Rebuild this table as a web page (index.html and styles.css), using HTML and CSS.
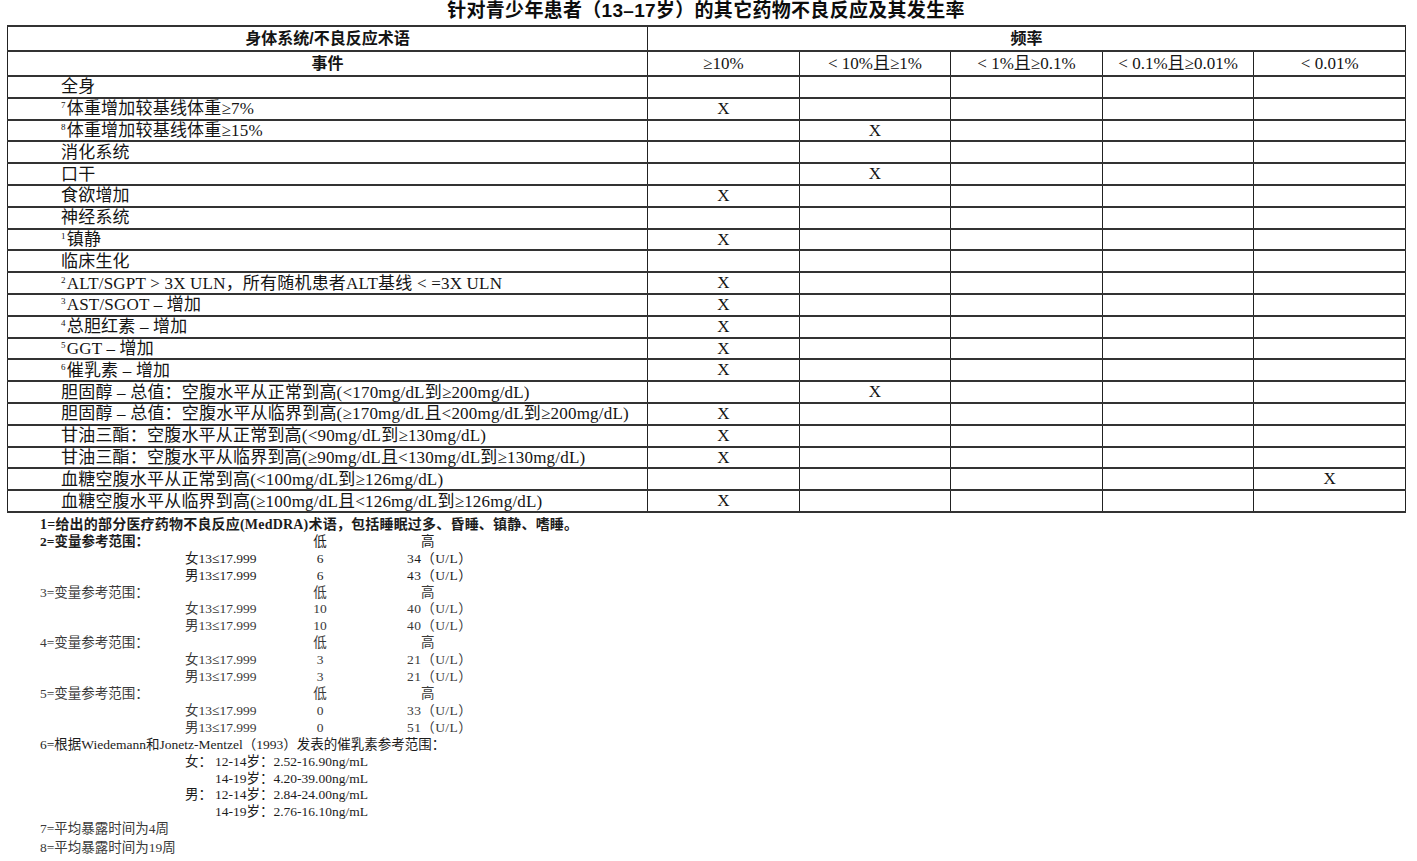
FILE: index.html
```html
<!DOCTYPE html>
<html lang="zh-CN">
<head>
<meta charset="utf-8">
<title>针对青少年患者（13–17岁）的其它药物不良反应及其发生率</title>
<link rel="stylesheet" href="styles.css">
</head>
<body>
<div class="page">
  <h1 class="title">针对青少年患者（13–17岁）的其它药物不良反应及其发生率</h1>
  <table class="freq">
    <colgroup>
      <col class="c-term"><col class="c-f"><col class="c-f"><col class="c-f"><col class="c-f"><col class="c-f">
    </colgroup>
    <thead>
      <tr class="hrow">
        <th class="head-b">身体系统/不良反应术语</th>
        <th class="head-b" colspan="5">频率</th>
      </tr>
      <tr class="hrow">
        <th class="head-b">事件</th>
        <th class="head-n">≥10%</th>
        <th class="head-n">&lt; 10%且≥1%</th>
        <th class="head-n">&lt; 1%且≥0.1%</th>
        <th class="head-n">&lt; 0.1%且≥0.01%</th>
        <th class="head-n">&lt; 0.01%</th>
      </tr>
    </thead>
    <tbody>
      <tr><td class="term">全身</td><td></td><td></td><td></td><td></td><td></td></tr>
      <tr><td class="term"><sup class="fn">7</sup>体重增加较基线体重≥7%</td><td class="x">X</td><td></td><td></td><td></td><td></td></tr>
      <tr><td class="term"><sup class="fn">8</sup>体重增加较基线体重≥15%</td><td></td><td class="x">X</td><td></td><td></td><td></td></tr>
      <tr><td class="term">消化系统</td><td></td><td></td><td></td><td></td><td></td></tr>
      <tr><td class="term">口干</td><td></td><td class="x">X</td><td></td><td></td><td></td></tr>
      <tr><td class="term">食欲增加</td><td class="x">X</td><td></td><td></td><td></td><td></td></tr>
      <tr><td class="term">神经系统</td><td></td><td></td><td></td><td></td><td></td></tr>
      <tr><td class="term"><sup class="fn">1</sup>镇静</td><td class="x">X</td><td></td><td></td><td></td><td></td></tr>
      <tr><td class="term">临床生化</td><td></td><td></td><td></td><td></td><td></td></tr>
      <tr><td class="term"><sup class="fn">2</sup>ALT/SGPT &gt; 3X ULN，所有随机患者ALT基线 &lt; =3X ULN</td><td class="x">X</td><td></td><td></td><td></td><td></td></tr>
      <tr><td class="term"><sup class="fn">3</sup>AST/SGOT – 增加</td><td class="x">X</td><td></td><td></td><td></td><td></td></tr>
      <tr><td class="term"><sup class="fn">4</sup>总胆红素 – 增加</td><td class="x">X</td><td></td><td></td><td></td><td></td></tr>
      <tr><td class="term"><sup class="fn">5</sup>GGT – 增加</td><td class="x">X</td><td></td><td></td><td></td><td></td></tr>
      <tr><td class="term"><sup class="fn">6</sup>催乳素 – 增加</td><td class="x">X</td><td></td><td></td><td></td><td></td></tr>
      <tr><td class="term">胆固醇 – 总值：空腹水平从正常到高(&lt;170mg/dL到≥200mg/dL)</td><td></td><td class="x">X</td><td></td><td></td><td></td></tr>
      <tr><td class="term">胆固醇 – 总值：空腹水平从临界到高(≥170mg/dL且&lt;200mg/dL到≥200mg/dL)</td><td class="x">X</td><td></td><td></td><td></td><td></td></tr>
      <tr><td class="term">甘油三酯：空腹水平从正常到高(&lt;90mg/dL到≥130mg/dL)</td><td class="x">X</td><td></td><td></td><td></td><td></td></tr>
      <tr><td class="term">甘油三酯：空腹水平从临界到高(≥90mg/dL且&lt;130mg/dL到≥130mg/dL)</td><td class="x">X</td><td></td><td></td><td></td><td></td></tr>
      <tr><td class="term">血糖空腹水平从正常到高(&lt;100mg/dL到≥126mg/dL)</td><td></td><td></td><td></td><td></td><td class="x">X</td></tr>
      <tr><td class="term">血糖空腹水平从临界到高(≥100mg/dL且&lt;126mg/dL到≥126mg/dL)</td><td class="x">X</td><td></td><td></td><td></td><td></td></tr>
    </tbody>
  </table>

  <div class="notes">
    <p class="note strong first">1=给出的部分医疗药物不良反应(MedDRA)术语，包括睡眠过多、昏睡、镇静、嗜睡。</p>

    <div class="range">
      <span class="lab strong">2=变量参考范围：</span><span class="lo">低</span><span class="hi hi-h">高</span>
      <span class="sex">女13≤17.999</span><span class="lo">6</span><span class="hi">34（U/L）</span>
      <span class="sex">男13≤17.999</span><span class="lo">6</span><span class="hi">43（U/L）</span>
    </div>
    <div class="range light">
      <span class="lab">3=变量参考范围：</span><span class="lo">低</span><span class="hi hi-h">高</span>
      <span class="sex">女13≤17.999</span><span class="lo">10</span><span class="hi">40（U/L）</span>
      <span class="sex">男13≤17.999</span><span class="lo">10</span><span class="hi">40（U/L）</span>
    </div>
    <div class="range light">
      <span class="lab">4=变量参考范围：</span><span class="lo">低</span><span class="hi hi-h">高</span>
      <span class="sex">女13≤17.999</span><span class="lo">3</span><span class="hi">21（U/L）</span>
      <span class="sex">男13≤17.999</span><span class="lo">3</span><span class="hi">21（U/L）</span>
    </div>
    <div class="range light">
      <span class="lab">5=变量参考范围：</span><span class="lo">低</span><span class="hi hi-h">高</span>
      <span class="sex">女13≤17.999</span><span class="lo">0</span><span class="hi">33（U/L）</span>
      <span class="sex">男13≤17.999</span><span class="lo">0</span><span class="hi">51（U/L）</span>
    </div>

    <p class="note">6=根据Wiedemann和Jonetz-Mentzel（1993）发表的催乳素参考范围：</p>
    <div class="prl">
      <span class="g">女：</span><span>12-14岁：2.52-16.90ng/mL</span>
      <span class="g"></span><span>14-19岁：4.20-39.00ng/mL</span>
      <span class="g">男：</span><span>12-14岁：2.84-24.00ng/mL</span>
      <span class="g"></span><span>14-19岁：2.76-16.10ng/mL</span>
    </div>

    <p class="note light">7=平均暴露时间为4周</p>
    <p class="note light last">8=平均暴露时间为19周</p>
  </div>
</div>
</body>
</html>
```

FILE: styles.css
```css
html, body {
  margin: 0;
  padding: 0;
  background: #ffffff;
}

body {
  font-family: "Liberation Serif", "Noto Sans CJK SC", serif;
  color: #141414;
}

.page {
  padding: 0 12px 0 7px;
  width: 1398px;
}

.title {
  margin: 0;
  height: 25px;
  line-height: 22px;
  font-size: 19px;
  font-weight: 700;
  text-align: center;
  font-family: "Liberation Sans", "Noto Sans CJK SC", sans-serif;
  letter-spacing: 0.3px;
  color: #0d0d0d;
}

.freq {
  width: 1398px;
  border-collapse: collapse;
  table-layout: fixed;
  border: 1.5px solid #262626;
}

.c-term { width: 640px; }
.c-f { width: 151.6px; }

.freq th,
.freq td {
  border-top: 2px solid #333333;
  border-bottom: 2px solid #333333;
  border-left: 1px solid #222222;
  border-right: 1px solid #222222;
  padding: 0;
  white-space: nowrap;
  overflow: hidden;
}

.hrow {
  height: 25px;
}

.head-b {
  font-size: 16px;
  line-height: 18px;
  font-weight: 700;
  text-align: center;
  font-family: "Liberation Sans", "Noto Sans CJK SC", sans-serif;
}

.head-n {
  font-size: 17px;
  line-height: 18px;
  font-weight: 400;
  text-align: center;
}

.freq tbody tr {
  height: 21.8px;
}

.term {
  font-size: 17px;
  line-height: 19px;
  padding-left: 53px !important;
  text-align: left;
  letter-spacing: 0.2px;
}

.fn {
  font-size: 9px;
  line-height: 0;
  vertical-align: 6px;
  margin-right: 1px;
}

.x {
  text-align: center;
  font-size: 17px;
  line-height: 17px;
  vertical-align: top;
  padding-top: 1px !important;
}

.notes {
  padding-top: 4px;
  font-size: 13.5px;
  line-height: 16.9px;
  color: #1c1c1c;
}

.note {
  margin: 0;
  padding-left: 33px;
}

.note.first {
  font-size: 14px;
  letter-spacing: 0.2px;
}

.strong {
  font-weight: 700;
}

.light {
  color: #3a3a3a;
}

.range {
  display: grid;
  grid-template-columns: 178px 95px 80px 140px;
}

.range .lab {
  grid-column: 1 / 3;
  padding-left: 33px;
}

.range .sex {
  grid-column: 2;
}

.range .lo {
  text-align: center;
}

.range .hi {
  padding-left: 47px;
  letter-spacing: 0.4px;
}

.range .hi-h {
  padding-left: 61px;
}

.prl {
  display: grid;
  grid-template-columns: 30px auto;
  padding-left: 178px;
  width: 300px;
}

.last {
  margin-top: 2px;
}
```
